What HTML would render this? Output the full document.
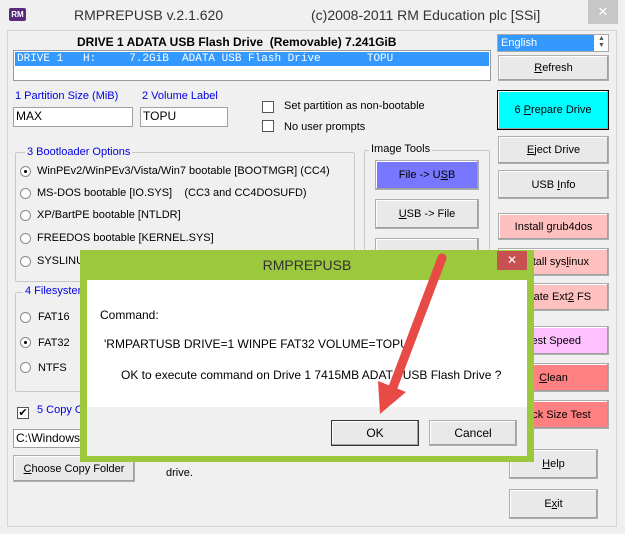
<!DOCTYPE html>
<html><head><meta charset="utf-8"><style>
*{box-sizing:border-box}
body{margin:0;width:625px;height:534px;background:#f0f0f0;font-family:"Liberation Sans",sans-serif;font-size:11px;color:#000;position:relative;overflow:hidden}
.a{position:absolute}
.btn{position:absolute;background:#e9e9e9;border:1px solid #adadad;box-shadow:inset -1px -1px 0 #a0a0a0, inset 1px 1px 0 #fff;display:flex;align-items:center;justify-content:center;font-size:11px;white-space:nowrap}
.in{position:absolute;background:#fff;border:1px solid #a0a0a0;padding-left:2px;font-size:12px;line-height:17px}
.grp{position:absolute;border:1px solid #c8c8c8;border-radius:2px}
.lg{position:absolute;background:#f0f0f0;padding:0 2px;font-size:11px}
.blue{color:#0000e0}
.rad{position:absolute;width:11px;height:11px;border:1px solid #8a8a8a;border-radius:50%;background:#fff}
.rad.on::after{content:"";position:absolute;left:3px;top:3px;width:3px;height:3px;border-radius:50%;background:#000}
.chk{position:absolute;width:12px;height:12px;border:1px solid #555;background:#fff}
.t{position:absolute;white-space:nowrap}
u{text-decoration:underline}
</style></head><body>
<!-- title bar -->
<div class="a" style="left:9px;top:8px;width:17px;height:13px;background:#5a2a7a;border-radius:2px;color:#fff;font-size:8px;font-weight:bold;line-height:13px;text-align:center">RM</div>
<div class="t" style="left:74px;top:7px;font-size:14px;color:#333">RMPREPUSB v.2.1.620</div>
<div class="t" style="left:311px;top:7px;font-size:14px;color:#333">(c)2008-2011 RM Education plc [SSi]</div>
<div class="a" style="left:588px;top:0;width:30px;height:24px;background:#c7c7c7;color:#fff;font-size:13px;text-align:center;line-height:24px">✕</div>
<!-- main frame -->
<div class="a" style="left:7px;top:30px;width:610px;height:497px;border:1px solid #d6d6d6;background:#f0f0f0"></div>
<div class="t" style="left:77px;top:35px;font-weight:bold;font-size:12px">DRIVE 1 ADATA USB Flash Drive&nbsp; (Removable) 7.241GiB</div>
<div class="a" style="left:13px;top:50px;width:478px;height:31px;background:#fff;border:1px solid #999"></div>
<div class="a" style="left:15px;top:52px;width:474px;height:14px;background:#3399ff;color:#fff;font-family:'Liberation Mono',monospace;font-size:11px;line-height:14px;white-space:pre;padding-left:2px">DRIVE 1   H:     7.2GiB  ADATA USB Flash Drive       TOPU</div>
<div class="t blue" style="left:15px;top:90px">1 Partition Size (MiB)</div>
<div class="t blue" style="left:142px;top:90px">2 Volume Label</div>
<div class="in" style="left:13px;top:107px;width:120px;height:20px">MAX</div>
<div class="in" style="left:140px;top:107px;width:88px;height:20px">TOPU</div>
<div class="chk" style="left:262px;top:101px"></div><div class="t" style="left:284px;top:100px">Set partition as non-bootable</div>
<div class="chk" style="left:262px;top:120px"></div><div class="t" style="left:284px;top:121px">No user prompts</div>
<!-- bootloader -->
<div class="grp" style="left:15px;top:152px;width:340px;height:130px"></div>
<div class="lg blue" style="left:25px;top:146px">3 Bootloader Options</div>
<div class="rad on" style="left:20px;top:166px"></div><div class="t" style="left:37px;top:165px">WinPEv2/WinPEv3/Vista/Win7 bootable [BOOTMGR] (CC4)</div>
<div class="rad" style="left:20px;top:188px"></div><div class="t" style="left:37px;top:187px">MS-DOS bootable [IO.SYS]&nbsp;&nbsp;&nbsp; (CC3 and CC4DOSUFD)</div>
<div class="rad" style="left:20px;top:210px"></div><div class="t" style="left:37px;top:209px">XP/BartPE bootable [NTLDR]</div>
<div class="rad" style="left:20px;top:233px"></div><div class="t" style="left:37px;top:232px">FREEDOS bootable [KERNEL.SYS]</div>
<div class="rad" style="left:20px;top:256px"></div><div class="t" style="left:37px;top:255px">SYSLINUX</div>
<!-- image tools -->
<div class="grp" style="left:364px;top:150px;width:126px;height:110px"></div>
<div class="lg" style="left:369px;top:143px">Image Tools</div>
<div class="btn" style="left:375px;top:160px;width:104px;height:30px;background:#7777ff"><span>File -&gt; U<u>S</u>B</span></div>
<div class="btn" style="left:375px;top:199px;width:104px;height:30px"><span><u>U</u>SB -&gt; File</span></div>
<div class="btn" style="left:375px;top:238px;width:104px;height:20px"></div>
<!-- filesystem -->
<div class="grp" style="left:15px;top:292px;width:120px;height:100px"></div>
<div class="lg blue" style="left:23px;top:285px">4 Filesystem</div>
<div class="rad" style="left:20px;top:312px"></div><div class="t" style="left:38px;top:311px">FAT16</div>
<div class="rad on" style="left:20px;top:337px"></div><div class="t" style="left:38px;top:337px">FAT32</div>
<div class="rad" style="left:20px;top:362px"></div><div class="t" style="left:38px;top:362px">NTFS</div>
<div class="chk" style="left:17px;top:407px;font-size:11px;line-height:10px;text-align:center">✔</div>
<div class="t blue" style="left:37px;top:404px">5 Copy OS files</div>
<div class="in" style="left:13px;top:429px;width:120px;height:19px">C:\Windows</div>
<div class="btn" style="left:13px;top:455px;width:122px;height:27px"><span><u>C</u>hoose Copy Folder</span></div>
<div class="t" style="left:166px;top:467px">drive.</div>
<!-- right column -->
<div class="a" style="left:497px;top:34px;width:112px;height:18px;background:#fff;border:1px solid #aaa"></div>
<div class="a" style="left:498px;top:35px;width:96px;height:16px;background:#3399ff;color:#fff;font-size:11px;line-height:16px;padding-left:3px">English</div>
<div class="t" style="left:598px;top:35px;font-size:7px;color:#555;line-height:7px">▲<br>▼</div>
<div class="btn" style="left:498px;top:55px;width:111px;height:26px"><span><u>R</u>efresh</span></div>
<div class="btn" style="left:497px;top:90px;width:112px;height:40px;background:#00ffff;border:1px solid #000"><span>6 <u>P</u>repare Drive</span></div>
<div class="btn" style="left:498px;top:136px;width:111px;height:28px"><span><u>E</u>ject Drive</span></div>
<div class="btn" style="left:498px;top:170px;width:111px;height:29px"><span>USB <u>I</u>nfo</span></div>
<div class="btn" style="left:498px;top:213px;width:111px;height:27px;background:#ffc0c0"><span>Install <u>g</u>rub4dos</span></div>
<div class="btn" style="left:498px;top:248px;width:111px;height:28px;background:#ffc0c0"><span>Install sys<u>l</u>inux</span></div>
<div class="btn" style="left:498px;top:283px;width:111px;height:28px;background:#ffc0c0"><span>Create Ext<u>2</u> FS</span></div>
<div class="btn" style="left:498px;top:326px;width:111px;height:29px;background:#ffc0ff"><span>Test Speed</span></div>
<div class="btn" style="left:498px;top:363px;width:111px;height:29px;background:#ff8080"><span><u>C</u>lean</span></div>
<div class="btn" style="left:498px;top:400px;width:111px;height:29px;background:#ff8080"><span>Block Size Test</span></div>
<div class="btn" style="left:509px;top:449px;width:89px;height:30px"><span><u>H</u>elp</span></div>
<div class="btn" style="left:509px;top:489px;width:89px;height:30px"><span>E<u>x</u>it</span></div>
<!-- dialog -->
<div class="a" style="left:80px;top:250px;width:454px;height:212px;background:#9bc83c"></div>
<div class="t" style="left:80px;top:257px;width:454px;text-align:center;font-size:14px;color:#333">RMPREPUSB</div>
<div class="a" style="left:497px;top:251px;width:30px;height:19px;background:#c75050;color:#fff;font-size:12px;text-align:center;line-height:19px">✕</div>
<div class="a" style="left:87px;top:280px;width:440px;height:127px;background:#fff"></div>
<div class="a" style="left:87px;top:407px;width:440px;height:49px;background:#f0f0f0"></div>
<div class="t" style="left:100px;top:308px;font-size:12px">Command:</div>
<div class="t" style="left:104px;top:337px;font-size:12px">'RMPARTUSB DRIVE=1 WINPE FAT32 VOLUME=TOPU'</div>
<div class="t" style="left:121px;top:368px;font-size:12px">OK to execute command on Drive 1 7415MB ADATA USB Flash Drive ?</div>
<div class="btn" style="left:331px;top:420px;width:88px;height:26px;border:1px solid #333;font-size:12px"><span>OK</span></div>
<div class="btn" style="left:429px;top:420px;width:88px;height:26px;font-size:12px"><span>Cancel</span></div>
<!-- arrow -->
<svg class="a" style="left:0;top:0" width="625" height="534"><g fill="#e84a45"><line x1="442" y1="258" x2="392" y2="390" stroke="#e84a45" stroke-width="9" stroke-linecap="round"/><polygon points="378,381 406,392 380,414"/></g></svg>
</body></html>
